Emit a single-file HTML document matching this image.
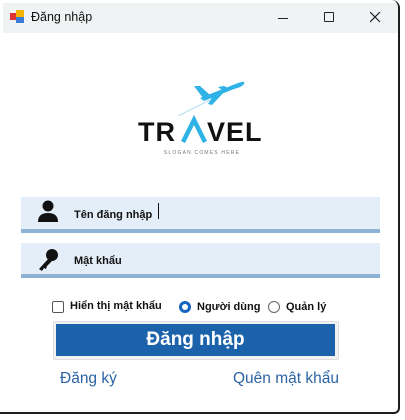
<!DOCTYPE html>
<html><head><meta charset="utf-8"><style>
body{margin:0;width:405px;height:420px;background:#fff;position:relative;overflow:hidden;font-family:"Liberation Sans","DejaVu Sans",sans-serif}
.win{position:absolute;left:0;top:0;width:398px;height:412px;background:#fff;border-right:2px solid #1e1e1e;border-bottom:2px solid #1e1e1e;border-radius:0 8px 6px 0;overflow:hidden}
.tb{position:absolute;left:3px;top:3px;width:396px;height:30px;background:#eff3f4}
.t{position:absolute;font-size:12.5px;color:#111}
.f{position:absolute;left:21px;width:359px;background:#e4eef9;border-bottom:4px solid #8db2d6}
.lbl{position:absolute;font-size:11px;font-weight:bold;color:#111}
.lnk{position:absolute;font-size:15.5px;color:#2b63a4}
</style></head><body>
<div class="win">
<div class="tb"></div>
<svg style="position:absolute;left:10px;top:10px" width="16" height="14"><rect x="0" y="3" width="7" height="7" fill="#d33"/><rect x="6" y="0" width="8" height="7" fill="#f4b400"/><rect x="6" y="7" width="8" height="6" fill="#3a7bd5"/></svg>
<div class="t" style="left:31px;top:10px">Đăng nhập</div>
<div style="position:absolute;left:278px;top:18px;width:10px;height:1px;background:#222"></div>
<div style="position:absolute;left:324px;top:12px;width:8px;height:8px;border:1.3px solid #222;border-radius:1px"></div>
<svg style="position:absolute;left:370px;top:12px" width="11" height="11"><path d="M0 0L10 10M10 0L0 10" stroke="#222" stroke-width="1.2"/></svg>
<svg style="position:absolute;left:130px;top:76px" width="150" height="80">
<path d="M48 40L80 24" stroke="#9fd4ee" stroke-width="0.8"/>
<path d="M70 22L108 7Q116 4 114 8Q112 11 104 13L74 25Z" fill="#2fb2e6"/>
<path d="M64 10L70 10L80 19L73 22Z" fill="#2fb2e6"/>
<path d="M84 18L96 14L82 29L78 28Z" fill="#2fb2e6"/>
<path d="M88 11L94 10L98 12L92 14Z" fill="#2fb2e6"/>
<text x="8" y="65" font-family="Liberation Sans,sans-serif" font-size="27" font-weight="bold" fill="#111" letter-spacing="1">TR</text>
<path d="M53 66L64 44L75 66" stroke="#2fb2e6" stroke-width="4.5" fill="none"/>
<text x="77" y="65" font-family="Liberation Sans,sans-serif" font-size="27" font-weight="bold" fill="#111" letter-spacing="1">VEL</text>
<text x="72" y="78" text-anchor="middle" font-size="5" fill="#777" letter-spacing="1.2">SLOGAN COMES HERE</text>
</svg>
<div class="f" style="top:197px;height:32px"></div>
<svg style="position:absolute;left:37px;top:199px" width="24" height="24"><circle cx="11" cy="7" r="5.5" fill="#111"/><path d="M1 23Q1 14 11 14Q21 14 21 23Z" fill="#111"/></svg>
<div class="lbl" style="left:74px;top:209px">Tên đăng nhập</div>
<div style="position:absolute;left:158px;top:203px;width:1px;height:16px;background:#111"></div>
<div class="f" style="top:243px;height:31px"></div>
<svg style="position:absolute;left:37px;top:248px" width="22" height="24"><circle cx="15" cy="7" r="6" fill="#111"/><path d="M12 10L2 21L5 23L7 20L9 21L10 18L15 13Z" fill="#111"/></svg>
<div class="lbl" style="left:74px;top:255px">Mật khẩu</div>
<div style="position:absolute;left:52px;top:301px;width:10px;height:10px;border:1px solid #555;border-radius:2px;background:#fff"></div>
<div class="lbl" style="left:70px;top:300px">Hiển thị mật khẩu</div>
<div style="position:absolute;left:179px;top:301px;width:6px;height:6px;border:3px solid #1565c0;border-radius:50%;background:#fff"></div>
<div class="lbl" style="left:197px;top:301px">Người dùng</div>
<div style="position:absolute;left:268px;top:301px;width:10px;height:10px;border:1px solid #666;border-radius:50%"></div>
<div class="lbl" style="left:286px;top:301px">Quản lý</div>
<div style="position:absolute;left:53px;top:321px;width:284px;height:37px;border:1px solid #ddd;border-radius:2px;background:#f2f2f2"></div>
<div style="position:absolute;left:56px;top:324px;width:279px;height:32px;background:#1b62ab;color:#fff;font-size:19px;font-weight:bold;text-align:center;line-height:32px">Đăng nhập</div>
<div class="lnk" style="left:60px;top:370px">Đăng ký</div>
<div class="lnk" style="left:233px;top:370px">Quên mật khẩu</div>
</div>
</body></html>
